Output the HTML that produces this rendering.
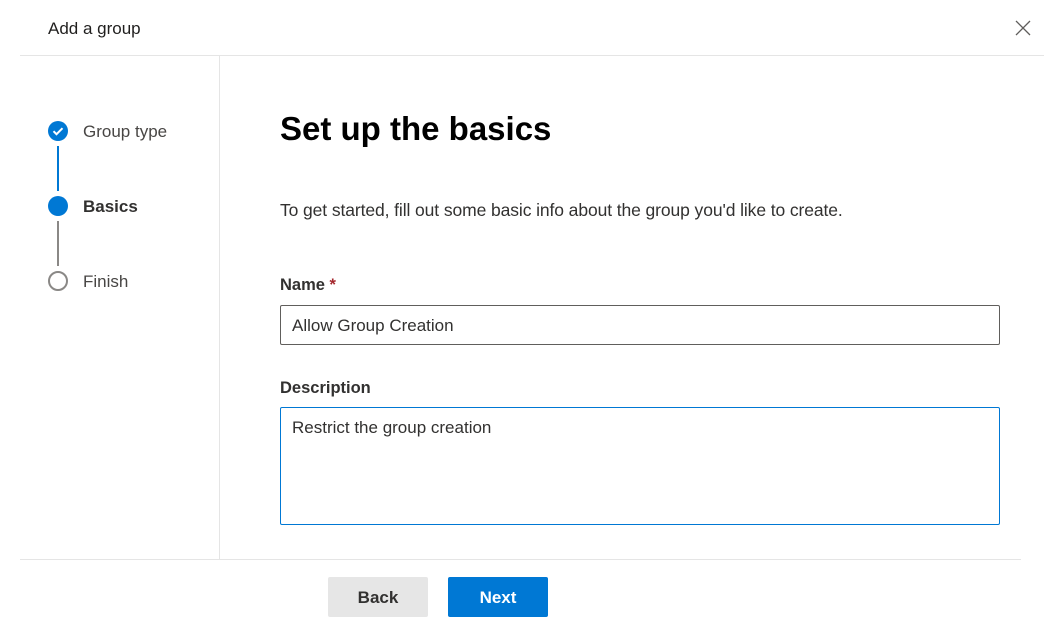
<!DOCTYPE html>
<html><head><style>
body{margin:0;width:1044px;height:634px;background:#fff;font-family:"Segoe UI","Liberation Sans",sans-serif;color:#323130;position:relative;overflow:hidden}
.a{position:absolute;white-space:nowrap}
</style></head><body>
<div class="a" style="left:48px;top:19px;font-size:17px;color:#201f1e">Add a group</div>
<svg class="a" style="left:1015px;top:20px" width="16" height="16" viewBox="0 0 16 16"><path d="M1 1L15 15M15 1L1 15" stroke="#605e5c" stroke-width="1.3"/></svg>
<div class="a" style="left:20px;top:55px;width:1024px;height:1px;background:#e5e5e5"></div>
<div class="a" style="left:219px;top:56px;width:1px;height:503px;background:#e5e5e5"></div>
<div class="a" style="left:20px;top:559px;width:1001px;height:1px;background:#e5e5e5"></div>

<svg class="a" style="left:48px;top:121px" width="20" height="20" viewBox="0 0 20 20"><circle cx="10" cy="10" r="10" fill="#0078d4"/><path d="M5.5 10.2l3 3 6-6" stroke="#fff" stroke-width="2" fill="none"/></svg>
<div class="a" style="left:57px;top:146px;width:2px;height:45px;background:#0078d4"></div>
<div class="a" style="left:48px;top:196px;width:20px;height:20px;border-radius:50%;background:#0078d4"></div>
<div class="a" style="left:57px;top:221px;width:2px;height:45px;background:#8a8886"></div>
<div class="a" style="left:48px;top:271px;width:16px;height:16px;border-radius:50%;border:2px solid #8a8886"></div>
<div class="a" style="left:83px;top:122px;font-size:17px;color:#484644">Group type</div>
<div class="a" style="left:83px;top:197px;font-size:17px;font-weight:600;color:#323130">Basics</div>
<div class="a" style="left:83px;top:272px;font-size:17px;color:#484644">Finish</div>

<div class="a" style="left:280px;top:110px;font-size:33px;font-weight:700;color:#000">Set up the basics</div>
<div class="a" style="left:280px;top:200px;font-size:17.5px;color:#323130;letter-spacing:-0.1px">To get started, fill out some basic info about the group you'd like to create.</div>
<div class="a" style="left:280px;top:276px;font-size:16.5px;font-weight:600">Name <span style="color:#a4262c">*</span></div>
<div class="a" style="left:280px;top:305px;width:718px;height:38px;border:1px solid #605e5c;border-radius:2px"></div>
<div class="a" style="left:292px;top:316px;font-size:17px">Allow Group Creation</div>
<div class="a" style="left:280px;top:379px;font-size:16.5px;font-weight:600">Description</div>
<div class="a" style="left:280px;top:407px;width:718px;height:116px;border:1px solid #0078d4;border-radius:2px"></div>
<div class="a" style="left:292px;top:418px;font-size:17px">Restrict the group creation</div>

<div class="a" style="left:328px;top:577px;width:100px;height:40px;background:#e6e6e6;border-radius:2px;text-align:center;line-height:42px;font-size:17px;font-weight:600;color:#323130">Back</div>
<div class="a" style="left:448px;top:577px;width:100px;height:40px;background:#0078d4;border-radius:2px;text-align:center;line-height:42px;font-size:17px;font-weight:600;color:#fff">Next</div>
</body></html>
